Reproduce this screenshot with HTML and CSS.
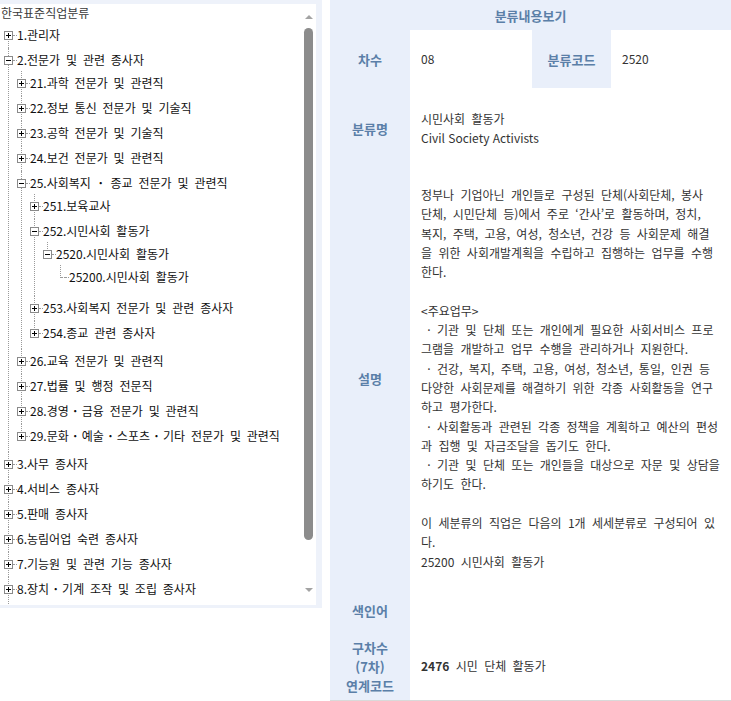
FILE: index.html
```html
<!DOCTYPE html>
<html lang="ko">
<head>
<meta charset="utf-8">
<title>한국표준직업분류</title>
<link rel="stylesheet" href="styles.css">
</head>
<body>
<div class="page">
  <div class="left">
    <div class="treebox">
      <div class="treeview">
        <div class="tree-title">한국표준직업분류</div>
        <ul class="tree">
          <li><div class="row"><span class="tg plus"></span><span class="stub"></span><span class="lb">1.관리자</span></div></li>
          <li><div class="row"><span class="tg"></span><span class="stub"></span><span class="lb">2.전문가 및 관련 종사자</span></div>
            <ul>
              <li><div class="row"><span class="tg plus"></span><span class="stub"></span><span class="lb">21.과학 전문가 및 관련직</span></div></li>
              <li><div class="row"><span class="tg plus"></span><span class="stub"></span><span class="lb">22.정보 통신 전문가 및 기술직</span></div></li>
              <li><div class="row"><span class="tg plus"></span><span class="stub"></span><span class="lb">23.공학 전문가 및 기술직</span></div></li>
              <li><div class="row"><span class="tg plus"></span><span class="stub"></span><span class="lb">24.보건 전문가 및 관련직</span></div></li>
              <li><div class="row"><span class="tg"></span><span class="stub"></span><span class="lb">25.사회복지 <span class="md">·</span> 종교 전문가 및 관련직</span></div>
                <ul>
                  <li><div class="row"><span class="tg plus"></span><span class="stub"></span><span class="lb">251.보육교사</span></div></li>
                  <li><div class="row"><span class="tg"></span><span class="stub"></span><span class="lb">252.시민사회 활동가</span></div>
                    <ul>
                      <li><div class="row"><span class="tg"></span><span class="stub"></span><span class="lb">2520.시민사회 활동가</span></div>
                        <ul>
                          <li><div class="row"><span class="leaf"></span><span class="stub"></span><span class="lb">25200.시민사회 활동가</span></div></li>
                        </ul>
                      </li>
                    </ul>
                  </li>
                  <li><div class="row"><span class="tg plus"></span><span class="stub"></span><span class="lb">253.사회복지 전문가 및 관련 종사자</span></div></li>
                  <li><div class="row"><span class="tg plus"></span><span class="stub"></span><span class="lb">254.종교 관련 종사자</span></div></li>
                </ul>
              </li>
              <li><div class="row"><span class="tg plus"></span><span class="stub"></span><span class="lb">26.교육 전문가 및 관련직</span></div></li>
              <li><div class="row"><span class="tg plus"></span><span class="stub"></span><span class="lb">27.법률 및 행정 전문직</span></div></li>
              <li><div class="row"><span class="tg plus"></span><span class="stub"></span><span class="lb">28.경영<span class="mdw">·</span>금융 전문가 및 관련직</span></div></li>
              <li><div class="row"><span class="tg plus"></span><span class="stub"></span><span class="lb">29.문화<span class="mdw">·</span>예술<span class="mdw">·</span>스포츠<span class="mdw">·</span>기타 전문가 및 관련직</span></div></li>
            </ul>
          </li>
          <li><div class="row"><span class="tg plus"></span><span class="stub"></span><span class="lb">3.사무 종사자</span></div></li>
          <li><div class="row"><span class="tg plus"></span><span class="stub"></span><span class="lb">4.서비스 종사자</span></div></li>
          <li><div class="row"><span class="tg plus"></span><span class="stub"></span><span class="lb">5.판매 종사자</span></div></li>
          <li><div class="row"><span class="tg plus"></span><span class="stub"></span><span class="lb">6.농림어업 숙련 종사자</span></div></li>
          <li><div class="row"><span class="tg plus"></span><span class="stub"></span><span class="lb">7.기능원 및 관련 기능 종사자</span></div></li>
          <li class="more"><div class="row"><span class="tg plus"></span><span class="stub"></span><span class="lb">8.장치<span class="mdw">·</span>기계 조작 및 조립 종사자</span></div></li>
        </ul>
      </div>
      <div class="scrollbar">
        <div class="sb-btn sb-up"><span class="tri-up"></span></div>
        <div class="sb-track"><div class="sb-thumb"></div></div>
        <div class="sb-btn sb-down"><span class="tri-down"></span></div>
      </div>
    </div>
  </div>

  <div class="detail">
    <table class="info">
      <colgroup>
        <col class="c-lab"><col class="c-val1"><col class="c-lab2"><col class="c-val2">
      </colgroup>
      <tr class="r-head"><th colspan="4">분류내용보기</th></tr>
      <tr class="r-1">
        <th>차수</th><td>08</td>
        <th>분류코드</th><td>2520</td>
      </tr>
      <tr class="r-2">
        <th>분류명</th>
        <td colspan="3">시민사회 활동가<br><span class="en">Civil Society Activists</span></td>
      </tr>
      <tr class="r-3">
        <th>설명</th>
        <td colspan="3" class="desc">정부나 기업아닌 개인들로 구성된 단체(사회단체, 봉사<br>단체, 시민단체 등)에서 주로 ‘간사’로 활동하며, 정치,<br>복지, 주택, 고용, 여성, 청소년, 건강 등 사회문제 해결<br>을 위한 사회개발계획을 수립하고 집행하는 업무를 수행<br>한다.<br><br>&lt;주요업무&gt;<br>&nbsp;· 기관 및 단체 또는 개인에게 필요한 사회서비스 프로<br>그램을 개발하고 업무 수행을 관리하거나 지원한다.<br>&nbsp;· 건강, 복지, 주택, 고용, 여성, 청소년, 통일, 인권 등<br>다양한 사회문제를 해결하기 위한 각종 사회활동을 연구<br>하고 평가한다.<br>&nbsp;· 사회활동과 관련된 각종 정책을 계획하고 예산의 편성<br>과 집행 및 자금조달을 돕기도 한다.<br>&nbsp;· 기관 및 단체 또는 개인들을 대상으로 자문 및 상담을<br>하기도 한다.<br><br>이 세분류의 직업은 다음의 1개 세세분류로 구성되어 있<br>다.<br>25200 시민사회 활동가</td>
      </tr>
      <tr class="r-4">
        <th>색인어</th>
        <td colspan="3"></td>
      </tr>
      <tr class="r-5">
        <th class="multi">구차수<br>(7차)<br>연계코드</th>
        <td colspan="3"><b>2476</b> 시민 단체 활동가</td>
      </tr>
    </table>
  </div>
</div>
</body>
</html>
```

FILE: styles.css
```css
* { box-sizing: border-box; }

html, body {
  margin: 0;
  padding: 0;
  background: #fff;
}

body {
  font-family: "Noto Sans CJK KR", "Noto Sans", sans-serif;
  font-size: 12px;
  color: #333;
}

.page {
  display: flex;
  align-items: flex-start;
  width: 731px;
  height: 701px;
  overflow: hidden;
}

/* ---------- left tree panel ---------- */
.left {
  flex: none;
  width: 322px;
  height: 608px;
  padding: 4px 6px 3px 0;
  background: #eef2fa;
}

.treebox {
  display: flex;
  width: 316px;
  height: 601px;
  background: #fff;
}

.treeview {
  flex: 1;
  overflow: hidden;
}

.tree-title {
  height: 18.5px;
  line-height: 18.5px;
  padding-left: 1px;
  color: #3a3a3a;
  white-space: nowrap;
}

.tree, .tree ul {
  list-style: none;
  margin: 0;
}

.tree {
  padding: 0 0 0 4px;
}

.tree ul {
  margin-top: -2px;
  padding: 0 0 3px 13px;
}

.tree li {
  position: relative;
}

.tree li::before {
  content: "";
  position: absolute;
  left: 4px;
  top: 0;
  bottom: 0;
  border-left: 1px dotted #9a9a9a;
}

.tree li:last-child::before {
  bottom: auto;
  height: 13px;
}

.tree > li:first-child::before {
  top: 13px;
}

/* more siblings follow below the visible area */
.tree > li.more::before {
  height: auto;
  bottom: -20px;
}

.row {
  display: flex;
  align-items: center;
  height: 25px;
  white-space: nowrap;
  color: #111;
}

.tg {
  position: relative;
  flex: none;
  width: 9px;
  height: 9px;
  border: 1px solid #8a8a8a;
  background: #fff;
}

.tg::before {
  content: "";
  position: absolute;
  left: 1px;
  top: 3px;
  width: 5px;
  height: 1px;
  background: #000;
}

.tg.plus::after {
  content: "";
  position: absolute;
  left: 3px;
  top: 1px;
  width: 1px;
  height: 5px;
  background: #000;
}

.leaf {
  position: relative;
  flex: none;
  width: 9px;
  height: 9px;
}

.leaf::after {
  content: "";
  position: absolute;
  left: 5px;
  right: 0;
  top: 4px;
  border-top: 1px dotted #9a9a9a;
}

.stub {
  flex: none;
  width: 4px;
  height: 1px;
  border-top: 1px dotted #9a9a9a;
}

.lb {
  line-height: 16px;
  word-spacing: 2.5px;
}

.md {
  display: inline-block;
  width: 8px;
  text-align: center;
  font-weight: bold;
}

.mdw {
  display: inline-block;
  width: 13px;
  text-align: center;
  font-weight: bold;
}

/* custom scrollbar */
.scrollbar {
  flex: none;
  width: 15px;
  display: flex;
  flex-direction: column;
  align-items: center;
}

.sb-btn {
  flex: none;
  width: 100%;
  height: 24px;
  display: flex;
  justify-content: center;
}

.sb-up { padding-top: 11px; }
.sb-down { padding-top: 7px; }

.tri-up {
  width: 0;
  height: 0;
  border-left: 4px solid transparent;
  border-right: 4px solid transparent;
  border-bottom: 4px solid #a3a3a3;
}

.tri-down {
  width: 0;
  height: 0;
  border-left: 4px solid transparent;
  border-right: 4px solid transparent;
  border-top: 4px solid #a3a3a3;
}

.sb-track {
  flex: 1;
  width: 100%;
  display: flex;
  justify-content: center;
}

.sb-thumb {
  width: 9px;
  height: 512px;
  border-radius: 5px;
  background: #8c8c8c;
}

/* ---------- right detail table ---------- */
.detail {
  flex: none;
  width: 401px;
  margin-left: 8px;
  border-bottom: 1px solid #d9d9d9;
}

.info {
  width: 401px;
  border-collapse: collapse;
  border-spacing: 0;
  table-layout: fixed;
}

.c-lab { width: 80px; }
.c-val1 { width: 122px; }
.c-lab2 { width: 79px; }
.c-val2 { width: 120px; }

.info th {
  padding: 0;
  background: #e9effa;
  color: #5b7fa8;
  font-size: 13px;
  font-weight: bold;
  text-align: center;
  vertical-align: middle;
  line-height: 19px;
}

.info td {
  padding: 0 4px 0 11px;
  vertical-align: middle;
  color: #333;
  line-height: 19.3px;
  white-space: nowrap;
  word-spacing: 3px;
}

.info td .en {
  word-spacing: 0;
}

.info td b {
  font-weight: bold;
  color: #333;
}

.r-head { height: 30px; }
.r-1 { height: 58px; }
.r-2 { height: 80px; }
.r-3 { height: 420px; }
.r-4 { height: 44px; }
.r-5 { height: 68px; }
```
